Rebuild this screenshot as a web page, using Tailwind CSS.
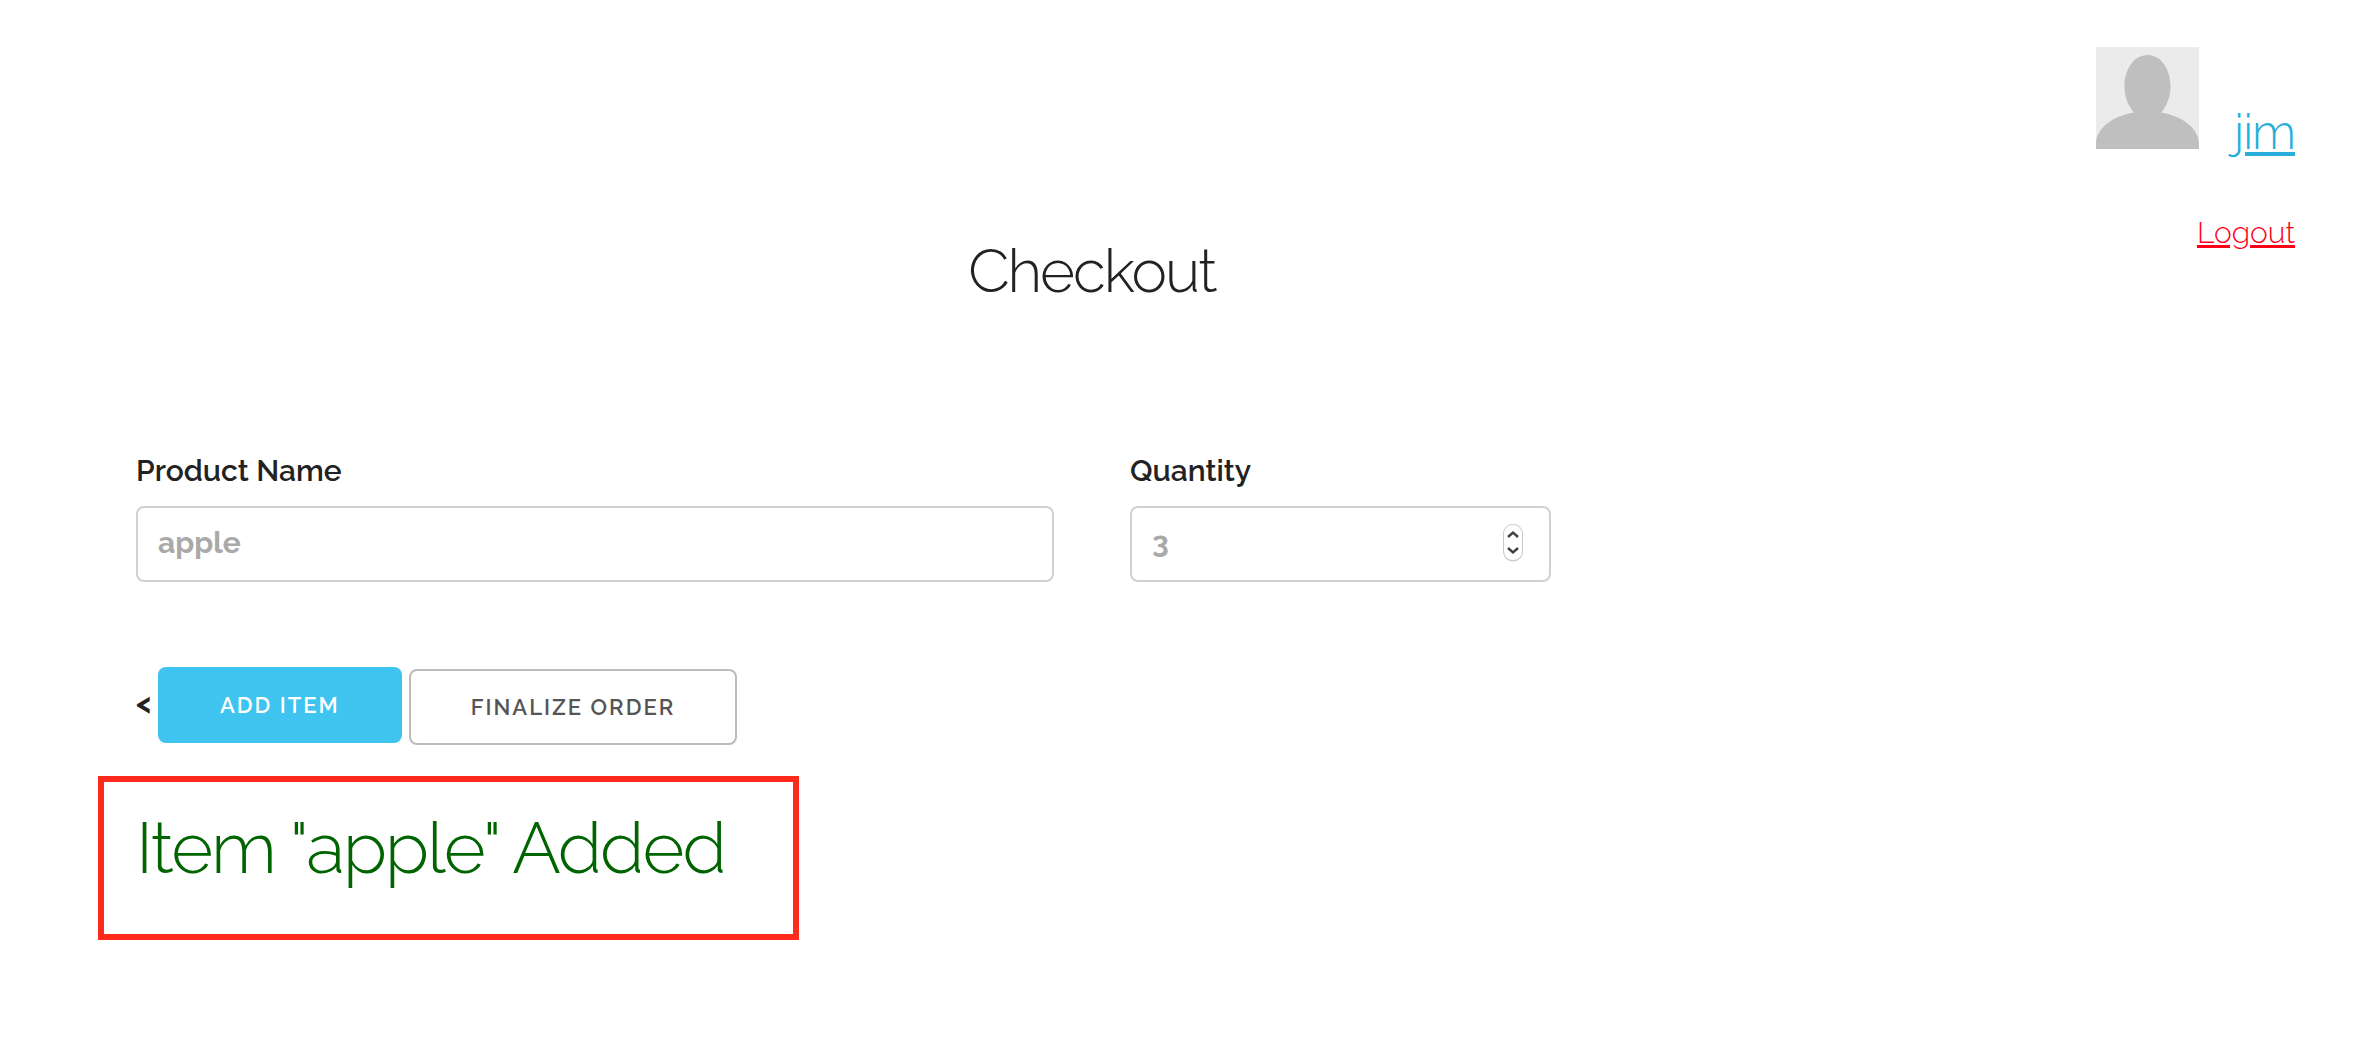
<!DOCTYPE html>
<html lang="en">
<head>
<meta charset="utf-8">
<title>Checkout</title>
<script src="https://cdn.jsdelivr.net/npm/@tailwindcss/browser@4"></script>
</head>
<body class="flex items-start bg-white font-['Raleway','Lato',sans-serif] text-[30px] leading-[48px] text-[#222]">
  <main class="ml-[136px] w-[81%] pt-[232px]">
    <h1 class="text-center text-[60px] leading-[78px] font-light tracking-[-2px]">Checkout</h1>
    <form class="mt-[137px]">
      <div class="flex gap-[4%]">
        <div class="w-[48%]">
          <label for="product" class="mb-[11px] block font-semibold">Product Name</label>
          <input id="product" type="text" placeholder="apple" class="block h-[76px] w-full rounded-lg border-2 border-[#d1d1d1] px-5 pb-[3px] font-bold placeholder:text-[#a9a9a9] focus:outline-none">
        </div>
        <div class="w-[22%]">
          <label for="quantity" class="mb-[11px] block font-semibold">Quantity</label>
          <div class="relative">
            <input id="quantity" type="number" placeholder="3" class="block h-[76px] w-full appearance-none rounded-lg border-2 border-[#d1d1d1] px-5 pb-[3px] font-bold placeholder:text-[#a9a9a9] focus:outline-none">
            <svg class="absolute top-[17px] right-[27px] h-[40px] w-[22px]" viewBox="0 0 22 40" fill="none" aria-hidden="true">
              <rect x="1.500" y="2.500" width="19" height="36" rx="9" fill="#999" opacity=".5"/>
              <rect x="1.500" y="1.500" width="19" height="36" rx="9" fill="#fff" stroke="#c8c8c8"/>
              <path d="M6 14 11 9.500l5 4.500M6 25 11 29.500l5-4.500" stroke="#404040" stroke-width="2.400"/>
            </svg>
          </div>
        </div>
      </div>
      <div class="mt-[85px] flex items-start gap-[7px]">
        <span class="w-[15px] pt-[12px] font-bold">&lt;</span>
        <button type="button" class="h-[76px] rounded-lg bg-[#3fc3ef] px-[62px] text-[22px] font-semibold tracking-[2px] text-white">ADD ITEM</button>
        <button type="button" class="mt-[2px] h-[76px] rounded-lg border-2 border-[#bbb] px-[60px] text-[22px] font-semibold tracking-[2px] text-[#555]">FINALIZE ORDER</button>
      </div>
    </form>
    <div class="-ml-[38px] mt-[31px] h-[164px] w-[701px] border-6 border-[#ff2a1c] pt-[23px] pl-[32px]">
      <h2 class="text-[72px] leading-[86px] font-light tracking-[-2px] whitespace-nowrap text-[#006400]">Item "apple" Added</h2>
    </div>
  </main>
  <aside class="flex flex-1 flex-col items-end pt-[47px] pr-[65px] font-light">
    <div class="flex items-end gap-[35px]">
      <svg class="h-[102px] w-[103px]" viewBox="0 0 103 102" role="img" aria-label="Avatar">
        <rect width="103" height="102" fill="#ebebeb"/>
        <path fill="#bfbfbf" d="M38 65.500C32 59 28.500 49 28.500 39.500 28.500 22 38 8 51.500 8S74.500 22 74.500 39.500C74.500 49 71 59 65 65.500 87 69 103 82 103 97v5H0v-5C0 82 16 69 38 65.500z"/>
      </svg>
      <a href="#" class="-mb-[13px] text-[48px] leading-[60px] tracking-[-1px] text-[#27aedb] underline">jim</a>
    </div>
    <a href="#" class="mt-[60px] text-[#ff0018] underline">Logout</a>
  </aside>
</body>
</html>
